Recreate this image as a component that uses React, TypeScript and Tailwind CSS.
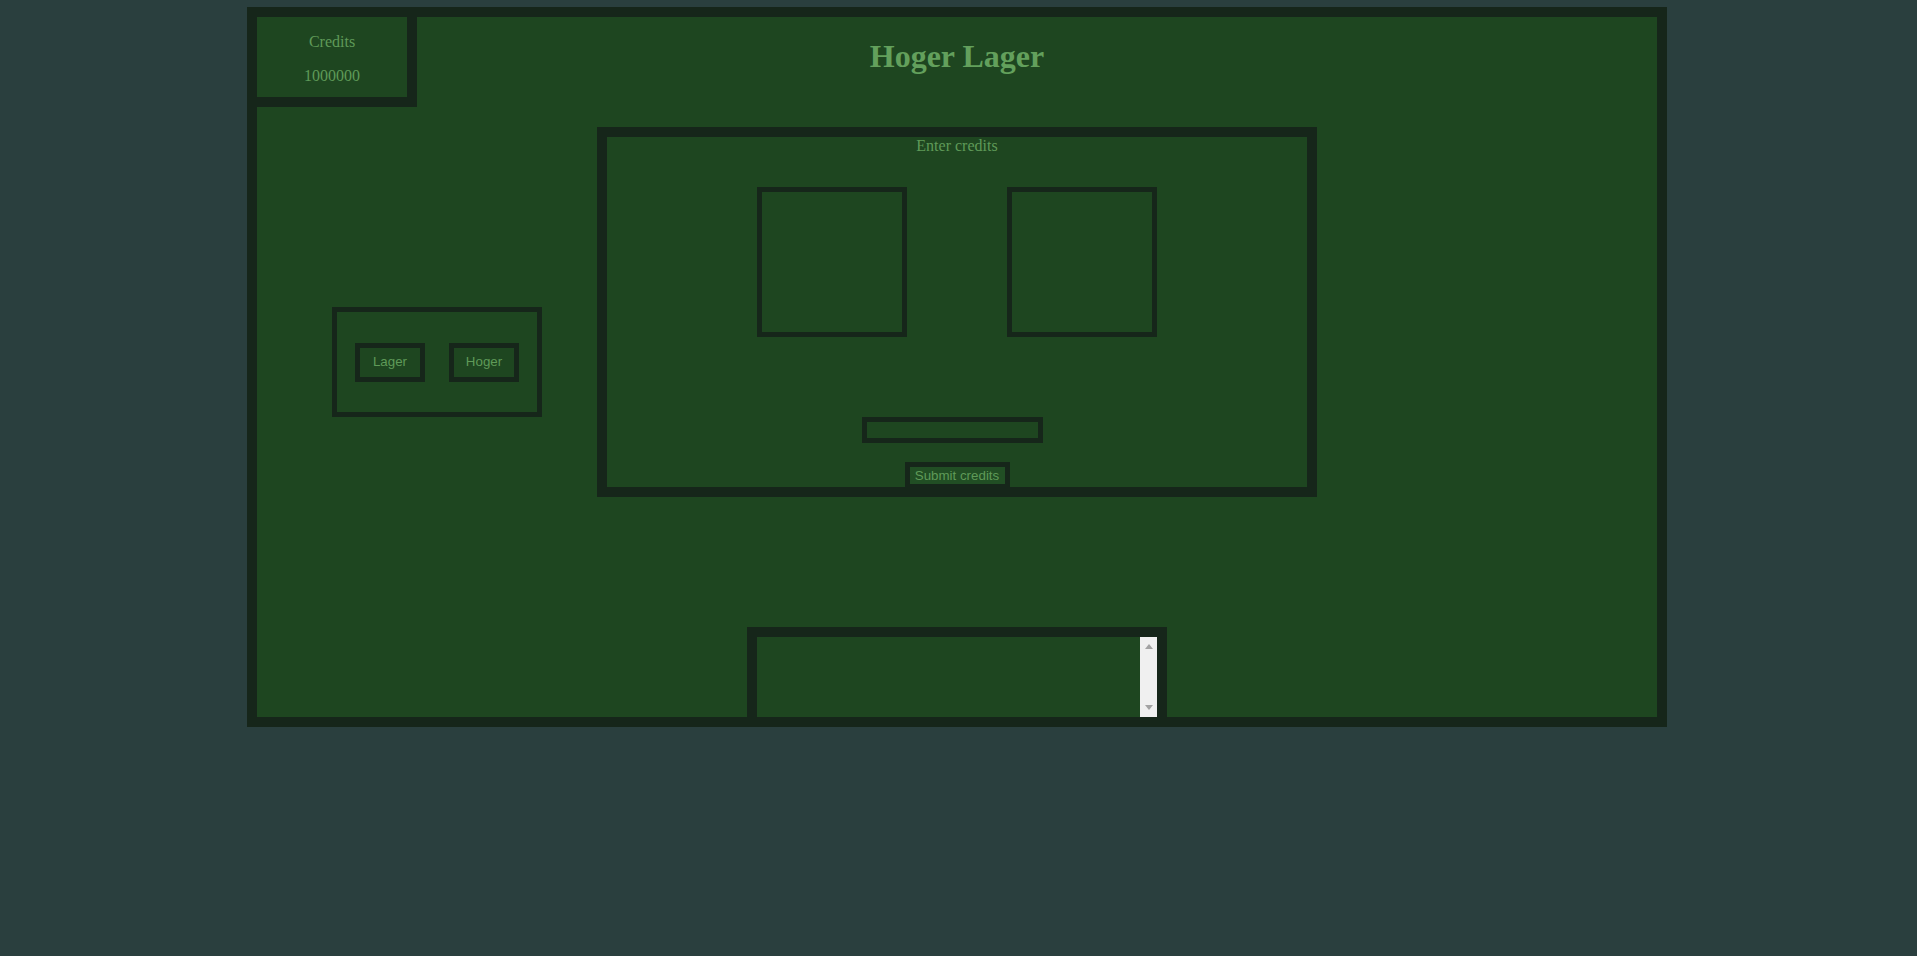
export default function App() {
  const border = 'border-[#16261a]';
  const text = 'text-[#5f9a58]';

  return (
    <div className="h-[956px] bg-[#2a3f3e] pt-[7px] font-['Liberation_Serif',serif]">
      <div className={`ml-[247px] w-[1420px] h-[720px] border-[10px] ${border} bg-[#1e4620] flex flex-col`}>
        {/* Top row: credits + title */}
        <div className="grid grid-cols-[160px_1fr_160px]">
          <div
            className={`h-[90px] border-r-[10px] border-b-[10px] ${border} flex flex-col items-center pt-[16px] gap-[16px] text-[16px] leading-[18px] ${text}`}
          >
            <p>Credits</p>
            <p>1000000</p>
          </div>
          <h1 className="pt-[21px] text-center text-[32px] leading-[37px] font-bold text-[#63a05c]">
            Hoger Lager
          </h1>
          <div />
        </div>

        {/* Middle row */}
        <div className="mt-[20px] flex">
          <div className="w-[340px] pl-[75px] pt-[180px]">
            <div className={`w-[210px] h-[110px] border-[5px] ${border} flex items-center justify-center gap-[24px]`}>
              <button
                className={`w-[70px] h-[39px] border-[5px] ${border} bg-[#1e4620] font-['Liberation_Sans',sans-serif] text-[13.33px] ${text}`}
              >
                Lager
              </button>
              <button
                className={`w-[70px] h-[39px] border-[5px] ${border} bg-[#1e4620] font-['Liberation_Sans',sans-serif] text-[13.33px] ${text}`}
              >
                Hoger
              </button>
            </div>
          </div>

          <div className={`w-[720px] h-[370px] border-[10px] ${border} flex flex-col items-center`}>
            <p className={`text-[16px] leading-[18px] ${text}`}>Enter credits</p>
            <div className="mt-[32px] flex gap-[100px]">
              <div className={`w-[150px] h-[150px] border-[5px] ${border}`} />
              <div className={`w-[150px] h-[150px] border-[5px] ${border}`} />
            </div>
            <input
              type="text"
              className={`mt-[80px] mr-[9px] w-[181px] h-[26px] border-[5px] ${border} bg-[#1e4620] outline-none`}
            />
            <button
              className={`mt-[19px] w-[105px] h-[27px] shrink-0 border-[5px] ${border} bg-[#214e24] font-['Liberation_Sans',sans-serif] text-[13.33px] leading-[15px] ${text}`}
            >
              Submit credits
            </button>
          </div>
        </div>

        {/* Bottom log area */}
        <div className="mt-auto flex justify-center">
          <div className={`w-[420px] h-[90px] border-[10px] border-b-0 ${border} flex`}>
            <textarea className="flex-1 h-[80px] resize-none overflow-hidden bg-[#1e4620] outline-none" />
            <div className="w-[17px] h-[80px] bg-[#f0f0f0] flex flex-col items-center justify-between py-[7px]">
              <svg width="8" height="5" viewBox="0 0 8 5">
                <path d="M0 5 L4 0 L8 5 Z" fill="#a3a3a3" />
              </svg>
              <svg width="8" height="5" viewBox="0 0 8 5">
                <path d="M0 0 L4 5 L8 0 Z" fill="#a3a3a3" />
              </svg>
            </div>
          </div>
        </div>
      </div>
    </div>
  );
}
